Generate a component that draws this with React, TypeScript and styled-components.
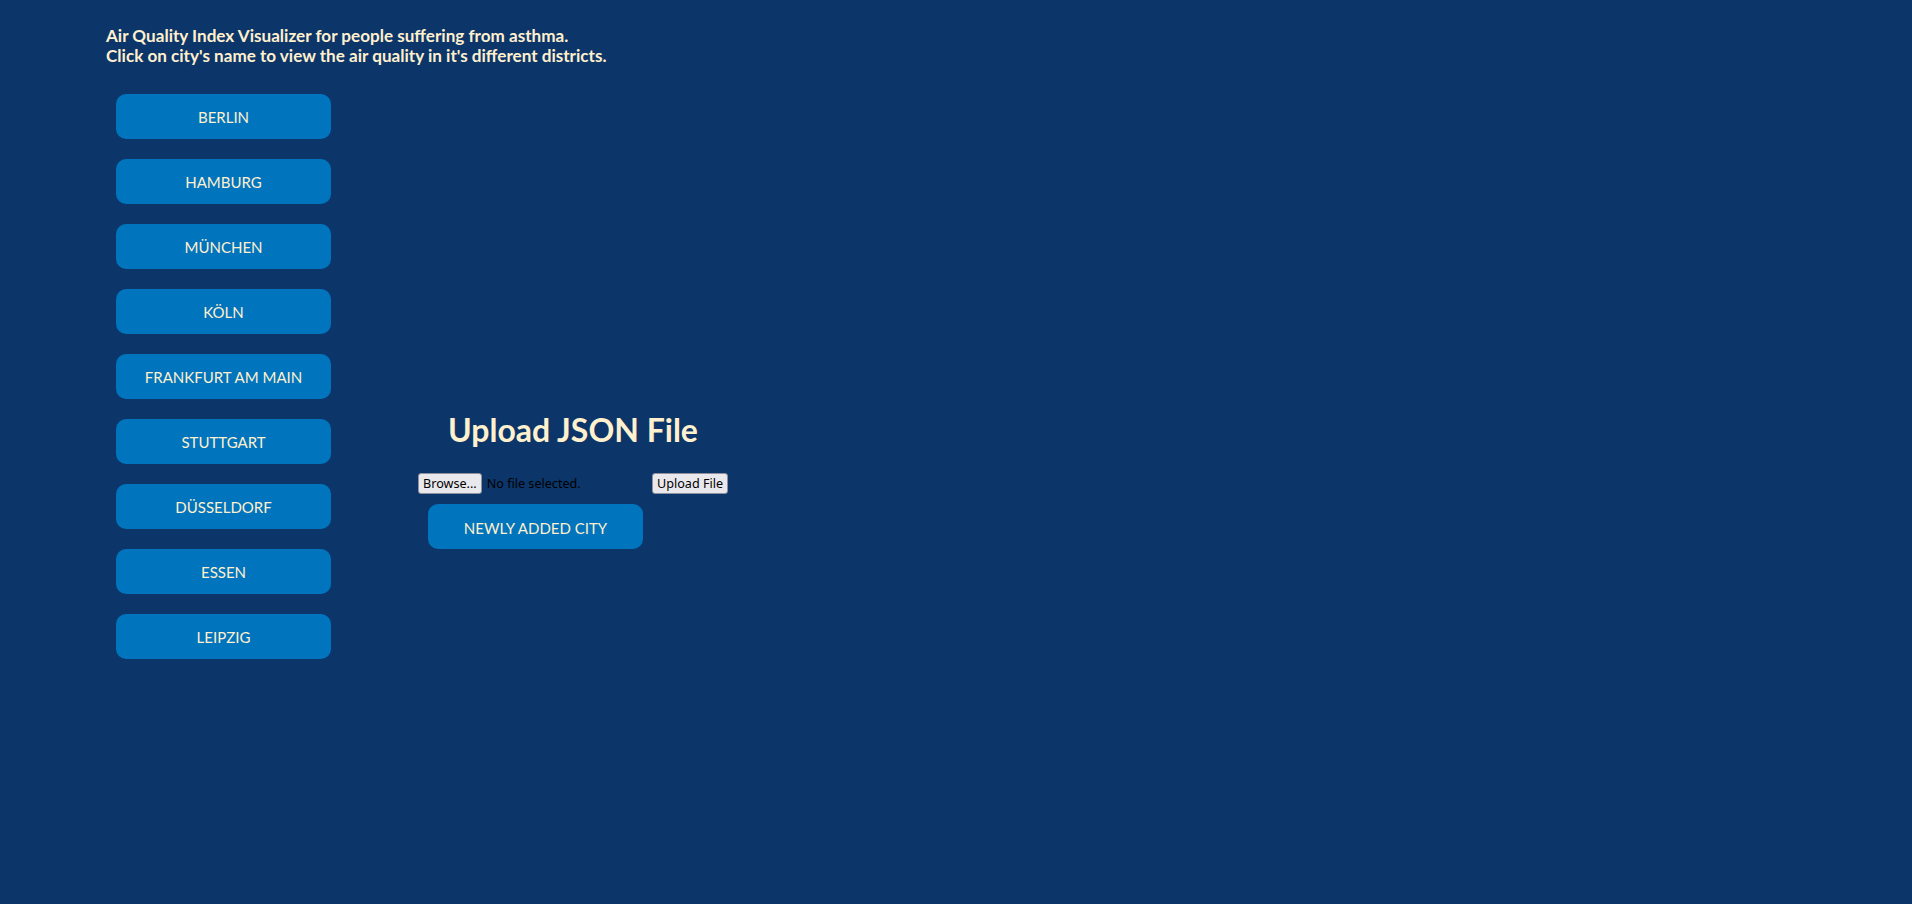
import React from "react";
import styled, { createGlobalStyle } from "styled-components";

const GlobalStyle = createGlobalStyle`
    html, body {
        margin: 0;
        padding: 0;
        background-color: #0c356a;
        min-height: 100%;
    }
    body {
        font-family: Lato, "Open Sans", sans-serif;
    }
`;

const Page = styled.div`
    min-height: 904px;
    padding: 26px 0 0 106px;
    box-sizing: border-box;
    background-color: #0c356a;
`;

const Intro = styled.p`
    margin: 0 0 17px 0;
    color: #fff0ce;
    font-size: 17.1px;
    font-weight: 700;
    line-height: 20.4px;
`;

const MainRow = styled.div`
    display: flex;
    align-items: flex-start;
`;

const CityList = styled.div`
    display: flex;
    flex-direction: column;
`;

const CityButton = styled.button`
    display: block;
    width: 215px;
    height: 45px;
    margin: 10px;
    padding: 2px 0 0 0;
    border: none;
    border-radius: 10px;
    background-color: #0174be;
    color: #fff0ce;
    font-family: Lato, sans-serif;
    font-size: 15px;
    cursor: pointer;
`;

const UploadPanel = styled.div`
    margin-left: 77px;
    padding-top: 327px;
    text-align: center;
`;

const UploadHeader = styled.h2`
    margin: 0 0 23px 0;
    color: #fff0ce;
    font-size: 32px;
    font-weight: 700;
    line-height: 1.2;
`;

const FileRow = styled.div`
    display: flex;
    align-items: center;
    height: 22px;
`;

const FileInput = styled.label`
    display: flex;
    align-items: center;
    width: 230px;
    font-family: "Noto Sans", sans-serif;
    font-size: 12.6px;
    color: #000000;
    input {
        display: none;
    }
`;

const NativeButton = styled.span`
    display: inline-flex;
    align-items: center;
    box-sizing: border-box;
    height: 21px;
    padding: 0 4px;
    border: 1px solid #8f8f9d;
    border-radius: 3px;
    background-color: #e9e9ed;
    color: #000000;
    font-family: "Noto Sans", sans-serif;
    font-size: 12.6px;
    cursor: default;
`;

const FileName = styled.span`
    margin-left: 5px;
`;

const UploadButton = styled(NativeButton)`
    margin-left: 4px;
`;

const cities = [
    "BERLIN",
    "HAMBURG",
    "MÜNCHEN",
    "KÖLN",
    "FRANKFURT AM MAIN",
    "STUTTGART",
    "DÜSSELDORF",
    "ESSEN",
    "LEIPZIG",
];

const App: React.FC = () => {
    return (
        <Page>
            <GlobalStyle />
            <Intro>
                Air Quality Index Visualizer for people suffering from asthma.
                <br />
                Click on city's name to view the air quality in it's different districts.
            </Intro>
            <MainRow>
                <CityList>
                    {cities.map((city) => (
                        <CityButton key={city}>{city}</CityButton>
                    ))}
                </CityList>
                <UploadPanel>
                    <UploadHeader>Upload JSON File</UploadHeader>
                    <FileRow>
                        <FileInput>
                            <input type="file" accept=".json" />
                            <NativeButton>Browse...</NativeButton>
                            <FileName>No file selected.</FileName>
                        </FileInput>
                        <UploadButton>Upload File</UploadButton>
                    </FileRow>
                    <CityButton>NEWLY ADDED CITY</CityButton>
                </UploadPanel>
            </MainRow>
        </Page>
    );
};

export default App;
